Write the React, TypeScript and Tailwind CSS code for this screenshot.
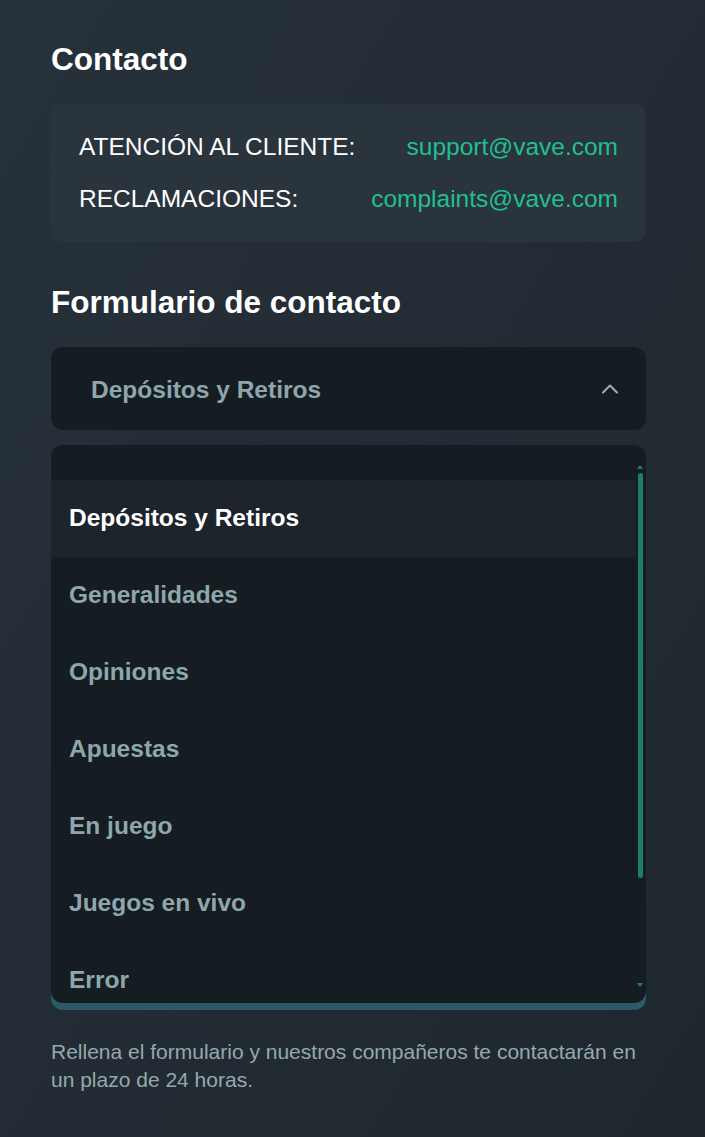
import { ChevronUp } from "lucide-react";

const topics = [
  "Depósitos y Retiros",
  "Generalidades",
  "Opiniones",
  "Apuestas",
  "En juego",
  "Juegos en vivo",
  "Error",
];

const contacts = [
  { label: "ATENCIÓN AL CLIENTE:", email: "support@vave.com" },
  { label: "RECLAMACIONES:", email: "complaints@vave.com" },
];

const ContactSection = () => {
  const selected = topics[0];

  return (
    <div className="min-h-[1137px] bg-gradient-to-br from-[#27313a] to-[#1f272e] pl-[51px] pr-[59px] pt-[38px] font-['Liberation_Sans',Arial,sans-serif]">
      {/* Contact info */}
      <h2 className="text-[31.5px] font-bold leading-[42px] text-white">Contacto</h2>
      <div className="mt-[24px] flex flex-col gap-4 rounded-xl bg-[#2a343d] px-7 py-[25px]">
        {contacts.map((c) => (
          <div key={c.label} className="flex items-center justify-between text-[24.5px] leading-9">
            <span className="text-white">{c.label}</span>
            <span className="text-[#22bf8f]">{c.email}</span>
          </div>
        ))}
      </div>

      {/* Form */}
      <h2 className="mt-[39px] text-[31.5px] font-bold leading-[42px] text-white">Formulario de contacto</h2>
      <button className="mt-[24px] flex h-[83px] w-full items-center justify-between rounded-xl bg-[#151c22] pl-10 pr-[22px]">
        <span className="mt-[3px] text-[24.5px] font-bold text-[#8ea7ab]">{selected}</span>
        <ChevronUp className="h-[28px] w-[28px] text-[#9fb3b7]" strokeWidth={1.7} />
      </button>

      <div className="relative mt-[15px] h-[558px] overflow-hidden rounded-xl bg-[#151c22] shadow-[0_7px_0_#2a5b66]">
        <ul className="w-[calc(100%-10px)] pt-[35px]">
          {topics.map((t) => (
            <li
              key={t}
              className={`flex h-[77px] items-center pl-[18px] text-[24.5px] font-bold ${
                t === selected ? "bg-[#1d242b] text-white" : "text-[#8ea7ab]"
              }`}
            >
              {t}
            </li>
          ))}
        </ul>
        {/* scrollbar */}
        <div className="absolute right-[3px] top-[20px] flex h-[522px] w-[6px] flex-col items-center">
          <div className="h-0 w-0 border-x-[3px] border-b-[4px] border-x-transparent border-b-[#1e7e6b]" />
          <div className="mt-[4px] h-[405px] w-[5px] rounded-full bg-[#1e7e6b]" />
          <div className="flex-1" />
          <div className="h-0 w-0 border-x-[3px] border-t-[4px] border-x-transparent border-t-[#1e7e6b]" />
        </div>
      </div>

      <p className="mt-[35px] text-[21px] leading-[28px] text-[#95a9ad]">
        Rellena el formulario y nuestros compañeros te contactarán en un plazo de 24 horas.
      </p>
    </div>
  );
};

export default function App() {
  return <ContactSection />;
}
